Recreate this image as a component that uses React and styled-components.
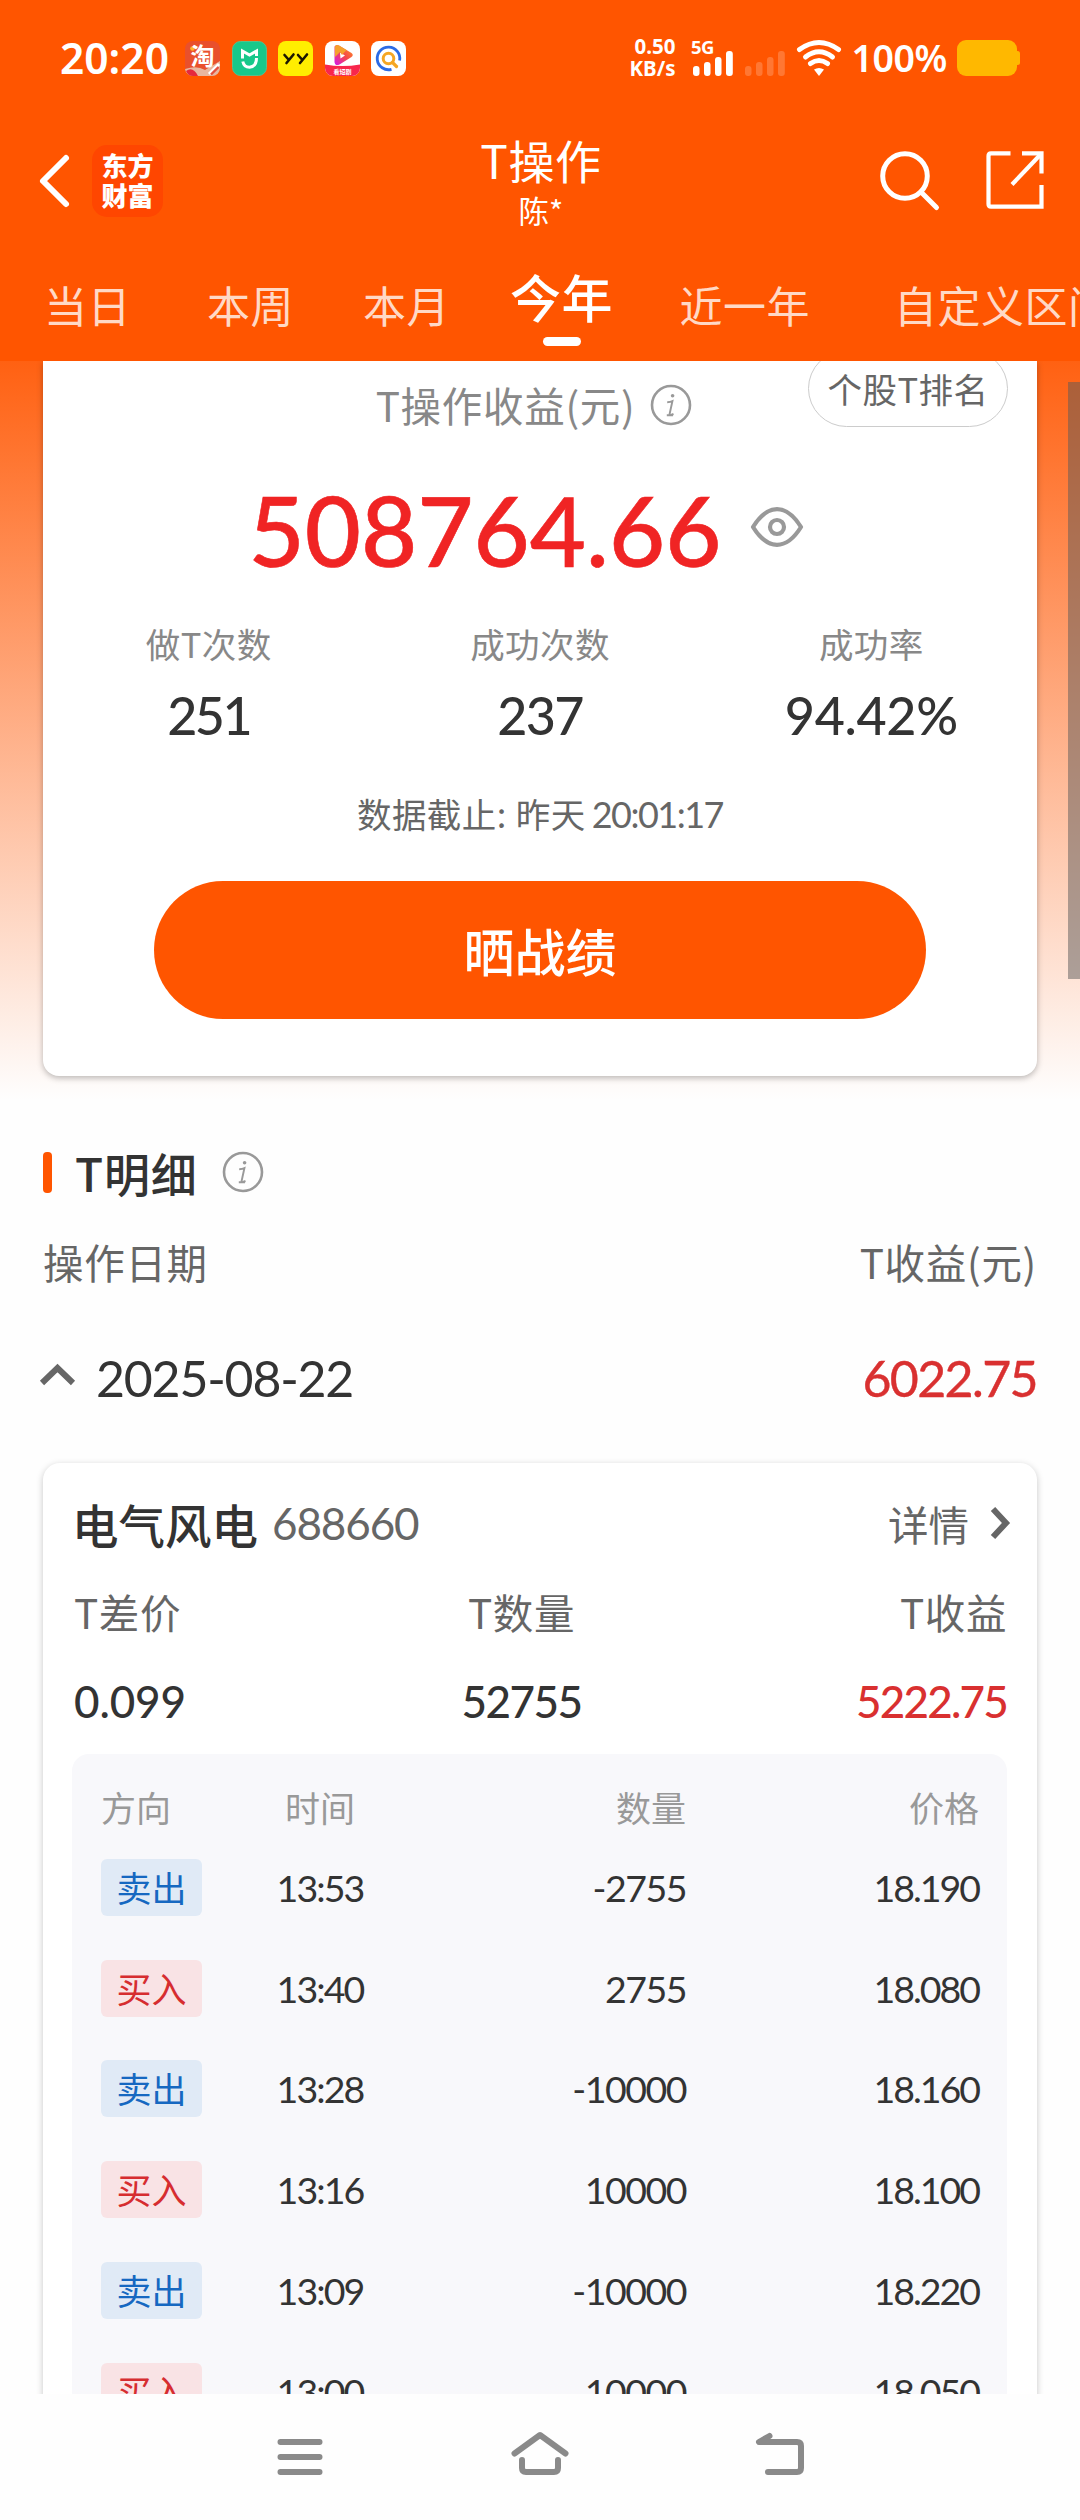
import React from 'react';
import styled, { createGlobalStyle } from 'styled-components';

const GlobalStyle = createGlobalStyle`
  * {
    box-sizing: border-box;
  }

  body {
    margin: 0;
    background: #fefefe;
    font-family: 'Noto Sans CJK SC', sans-serif;
    color: #333;
  }

  svg {
    display: block;
    flex-shrink: 0;
    overflow: visible;
  }
`;

const digits = "Lato, 'Noto Sans CJK SC', sans-serif";

const Screen = styled.div`
  width: 1080px;
  height: 2520px;
  display: flex;
  flex-direction: column;
  overflow: hidden;
  background: #fefefe;
`;

const Header = styled.header`
  height: 361px;
  flex-shrink: 0;
  background: #ff5500;
  color: #fff;
`;

/* ---------- status bar ---------- */

const StatusBar = styled.div`
  height: 116px;
  padding: 0 60px 0 60px;
  display: flex;
  align-items: center;
  justify-content: space-between;
  font-family: 'Noto Sans', sans-serif;
`;

const StatusGroup = styled.div`
  display: flex;
  align-items: center;
`;

const Clock = styled.span`
  width: 125px;
  font-size: 42.5px;
  font-weight: 600;
  line-height: 60px;
`;

const AppIcons = styled.div`
  display: flex;
  gap: 11.6px;
`;

const NetSpeed = styled.div`
  width: 48px;
  margin: 0 16px 1px 0;
  font-size: 20.5px;
  font-weight: 700;
  line-height: 21.5px;
  text-align: right;
`;

const Percent = styled.span`
  margin: 0 10px 0 9px;
  font-size: 37.5px;
  font-weight: 600;
  line-height: 60px;
  letter-spacing: -0.4px;
`;

/* ---------- title bar ---------- */

const TitleBar = styled.div`
  height: 132px;
  padding: 0 36px 0 38px;
  display: grid;
  grid-template-columns: 1fr auto 1fr;
  align-items: center;
`;

const TitleSide = styled.div`
  padding-bottom: ${props => (props.$end ? '4px' : '3px')};
  display: flex;
  align-items: center;
  justify-content: ${props => (props.$end ? 'flex-end' : 'flex-start')};
  gap: ${props => (props.$end ? '47px' : '20px')};
`;

const Brand = styled.div`
  width: 71px;
  height: 72px;
  padding-top: 5px;
  border-radius: 15px;
  background: #ff4600;
  font-size: 26px;
  font-weight: 900;
  line-height: 30px;
  text-align: center;
`;

const TitleText = styled.div`
  text-align: center;
`;

const PageTitle = styled.h1`
  margin: 0;
  padding-top: 1px;
  font-size: 46px;
  font-weight: 400;
  line-height: 56px;
  letter-spacing: 0.6px;
`;

const Account = styled.div`
  font-size: 30.5px;
  line-height: 47px;
`;

/* ---------- period tabs ---------- */

const Tabs = styled.nav`
  height: 113px;
  padding-left: 44px;
  display: flex;
  overflow: hidden;
  white-space: nowrap;
`;

const Tab = styled.div`
  margin-right: ${props => props.$gap}px;
  flex-shrink: 0;
  display: flex;
  flex-direction: column;
  align-items: center;
  padding-top: ${props => (props.$active ? 18 : 26)}px;
  font-size: ${props => (props.$active ? 51 : 43)}px;
  font-weight: ${props => (props.$active ? 500 : 400)};
  line-height: 60px;
  letter-spacing: 0.5px;
  color: ${props => (props.$active ? '#fff' : '#ffd9c6')};
`;

const TabMark = styled.span`
  width: 38px;
  height: 9px;
  margin-top: 11px;
  border-radius: 5px;
  background: #fff;
`;

/* ---------- scroll area ---------- */

const Content = styled.main`
  position: relative;
  height: 2033px;
  flex-shrink: 0;
  padding: 0 43px;
  overflow: hidden;
  background: linear-gradient(#ff6112 0, #fefefe 739px);
`;

const ScrollThumb = styled.div`
  position: absolute;
  top: 21px;
  right: 0;
  width: 12px;
  height: 597px;
  background: rgba(90, 90, 90, 0.5);
`;

const Summary = styled.section`
  position: relative;
  height: 715px;
  display: flex;
  flex-direction: column;
  align-items: center;
  border-radius: 0 0 16px 16px;
  background: #fff;
  box-shadow: 0 2px 6px rgba(0, 0, 0, 0.28);
`;

const SummaryTitle = styled.div`
  height: 90px;
  padding: 0 12px 3px 0;
  display: flex;
  align-items: center;
  gap: 15px;
  font-size: 40.5px;
  letter-spacing: 0.7px;
  color: #888;
`;

const RankButton = styled.button`
  position: absolute;
  top: -11px;
  right: 29px;
  width: 200px;
  height: 77px;
  padding: 0 0 2px;
  border: 1.5px solid #ccc;
  border-radius: 39px;
  background: #fff;
  font: inherit;
  font-size: 34.5px;
  letter-spacing: 0.5px;
  color: #666;
`;

const ProfitRow = styled.div`
  height: 158px;
  padding: 0 27px 0 0;
  display: flex;
  align-items: center;
  gap: 29px;
`;

const Profit = styled.div`
  font-family: ${digits};
  font-size: 97px;
  font-weight: 500;
  line-height: 110px;
  color: #f02424;
  -webkit-text-stroke: 0.6px #f02424;
`;

const EyeIcon = styled.svg`
  margin-bottom: 6px;
`;

const Stats = styled.div`
  width: 100%;
  padding-top: 9px;
  display: grid;
  grid-template-columns: repeat(3, 1fr);
  text-align: center;
`;

const StatLabel = styled.div`
  font-size: 34.5px;
  line-height: 50px;
  letter-spacing: 0.4px;
  color: #888;
`;

const StatValue = styled.div`
  margin-top: 17px;
  font-family: ${digits};
  font-size: 52px;
  font-weight: 500;
  line-height: 60px;
  letter-spacing: ${props => props.$track}px;
`;

const Deadline = styled.div`
  margin-top: 43px;
  font-size: 34.5px;
  line-height: 50px;
  letter-spacing: 0.4px;
  word-spacing: 1px;
  color: #666;
`;

const DeadlineTime = styled.span`
  margin-left: -3px;
  font-family: ${digits};
  font-size: 36px;
  letter-spacing: -1.5px;
`;

const ShareButton = styled.button`
  width: 772px;
  height: 138px;
  margin-top: 42px;
  padding: 0;
  border: 0;
  border-radius: 69px;
  background: #ff5500;
  color: #fff;
  font: inherit;
  font-size: 51px;
  font-weight: 500;
`;

/* ---------- detail list ---------- */

const SectionTitle = styled.div`
  height: 50px;
  margin-top: 71px;
  display: flex;
  align-items: center;
`;

const Accent = styled.span`
  width: 9px;
  height: 41px;
  border-radius: 4px;
  background: #ff5500;
`;

const SectionName = styled.h2`
  margin: 0 24px 0 23px;
  font-size: 46px;
  font-weight: 500;
  line-height: 50px;
  letter-spacing: 0.8px;
`;

const Row = styled.div`
  height: ${props => props.$height}px;
  margin-top: ${props => props.$top}px;
  display: flex;
  align-items: center;
  justify-content: space-between;
  font-size: 40.5px;
  letter-spacing: 0.7px;
  color: #666;
`;

const DateLabel = styled.div`
  margin-left: -1px;
  display: flex;
  align-items: center;
  gap: 21px;
  font-family: ${digits};
  font-size: 50px;
  letter-spacing: -1.2px;
  color: #333;
`;

const DayProfit = styled.div`
  font-family: ${digits};
  font-size: 50px;
  letter-spacing: -1.6px;
  color: #d93030;
  -webkit-text-stroke: 0.4px #d93030;
`;

const StockCard = styled.section`
  height: 1200px;
  margin-top: 55px;
  padding: 30px 30px 0 29px;
  border-radius: 17px;
  background: #fff;
  box-shadow: 0 2px 7px rgba(0, 0, 0, 0.22);
`;

const StockHead = styled.div`
  height: 60px;
  display: flex;
  align-items: center;
  justify-content: space-between;
`;

const StockName = styled.div`
  display: flex;
  align-items: center;
  gap: 14px;
  font-size: 46.5px;
  font-weight: 500;
`;

const StockCode = styled.span`
  font-family: ${digits};
  font-size: 44px;
  font-weight: 400;
  letter-spacing: -1.1px;
  color: #666;
`;

const DetailLink = styled.div`
  margin-right: -4px;
  display: flex;
  align-items: center;
  gap: 22px;
  font-size: 40.5px;
  color: #666;
`;

const TripleRow = styled.div`
  height: 50px;
  margin-top: ${props => props.$top}px;
  display: grid;
  grid-template-columns: 251px 1fr 251px;
  line-height: 50px;
  font-size: 40.5px;
  letter-spacing: 0.6px;
  color: #666;

  > :nth-child(1) {
    padding-left: 2px;
  }

  > :nth-child(2) {
    padding-right: 36px;
    text-align: center;
  }

  > :nth-child(3) {
    text-align: right;
  }
`;

const Figure = styled.span`
  font-family: ${digits};
  font-size: 44px;
  font-weight: 500;
  letter-spacing: ${props => props.$track}px;
  color: ${props => (props.$red ? '#d93030' : '#333')};
`;

const Trades = styled.div`
  height: 1000px;
  margin-top: 28px;
  padding: 27px 28px 0 29px;
  border-radius: 17px;
  background: #f8f8fb;
`;

const TradeRow = styled.div`
  height: ${props => (props.$head ? 56 : 100.8)}px;
  padding-bottom: ${props => (props.$head ? 7 : 0)}px;
  display: grid;
  grid-template-columns: 102px 234px 1fr 293px;
  align-items: center;
  font-size: 35px;
  color: #999;
`;

const HeadLabel = styled.span`
  text-align: ${props => props.$align};
`;

const Side = styled.span`
  width: 101px;
  height: 57px;
  border-radius: 6px;
  background: ${props => (props.$buy ? '#f9e3e5' : '#e0eaf6')};
  color: ${props => (props.$buy ? '#d62d30' : '#1668c1')};
  font-size: 35px;
  line-height: 55px;
  text-align: center;
`;

const Cell = styled.span`
  font-family: ${digits};
  font-size: 37.5px;
  letter-spacing: ${props => props.$track}px;
  text-align: ${props => props.$align};
  color: #333;
`;

/* ---------- system navigation ---------- */

const SystemNav = styled.footer`
  height: 126px;
  flex-shrink: 0;
  padding: 35px 240px 0;
  display: flex;
  justify-content: space-between;
  background: #fefefe;
`;

const InfoIcon = () => (
  <svg width="42" height="42" viewBox="0 0 42 42" fill="none" stroke="#999">
    <circle cx="21" cy="21" r="19" strokeWidth="2.6" />
    <path d="M17.2 18.2 Q20.5 18.2 22.4 17.2 L19.6 30 Q19.4 31.3 21 31 L23.5 30 M16.8 31.2 H23" strokeWidth="1.9" />
    <circle cx="22.6" cy="11.8" r="1.8" fill="#999" stroke="none" />
  </svg>
);

const Chevron = ({ width, height, points }) => (
  <svg width={width} height={height} fill="none" stroke="#666" strokeWidth="6">
    <polyline points={points} />
  </svg>
);

const SignalIcon = ({ faint, label }) => (
  <svg width={faint ? 42 : 54} height="40" viewBox={faint ? '0 0 42 40' : '0 0 54 40'}>
    {label && (
      <text x="0" y="16" fill="#fff" fontSize="18.5" fontWeight="700" letterSpacing="-0.6">
        {label}
      </text>
    )}
    <g fill="#fff" opacity={faint ? 0.2 : 1} transform={faint ? 'translate(0 0)' : 'translate(2 0)'}>
      <rect x="0" y="28" width="6.5" height="10" rx="3" />
      <rect x="11" y="24" width="6.5" height="14" rx="3" />
      <rect x="22" y="19" width="6.5" height="19" rx="3" />
      <rect x="33" y="13" width="6.8" height="25" rx="3" />
    </g>
  </svg>
);

const TaobaoIcon = () => (
  <svg width="35" height="35" viewBox="0 0 35 35">
    <rect width="35" height="35" rx="8" fill="#e9502c" />
    <path d="M0 28 Q12 24 20 29 L35 20 V27 A8 8 0 0 1 27 35 H8 A8 8 0 0 1 0 28 Z" fill="#e8b7a0" />
    <path d="M1 30 Q8 25 13 35 H8 Q3 35 1 30 Z" fill="#e5293d" />
    <path d="M24 33 L34 23" stroke="#fff" strokeWidth="3" />
    <path d="M26 33.5 L33.5 26" stroke="#e5503d" strokeWidth="2.4" />
    <circle cx="7.5" cy="7.5" r="2.3" fill="#ffb52e" />
    <text x="17.5" y="23.5" fill="#fff" fontSize="24" fontWeight="700" textAnchor="middle" fontFamily="Noto Sans CJK SC, sans-serif">
      淘
    </text>
  </svg>
);

const MijiaIcon = () => (
  <svg width="35" height="35" viewBox="0 0 35 35">
    <rect x="0.5" y="0.5" width="34" height="34" rx="8" fill="#18c88a" stroke="#58c08a" />
    <g fill="none" stroke="#fff" strokeWidth="3">
      <path d="M10.5 17.5 V10 L17.5 14 L24.5 10 V15" />
      <path d="M10.8 20.5 Q12 26.3 17.5 26.3 Q24.5 25.5 24.5 17" />
    </g>
  </svg>
);

const YYIcon = () => (
  <svg width="35" height="35" viewBox="0 0 35 35">
    <rect width="35" height="35" rx="8" fill="#ffee00" />
    <g fill="none" stroke="#1c1600" strokeWidth="2.6" strokeLinecap="round">
      <path d="M6.5 14 L10.5 18.5 M15.5 13.5 L8.5 22" />
      <path d="M20 14 L24 18.5 M29 13.5 L22 22" />
    </g>
  </svg>
);

const VideoIcon = () => (
  <svg width="35" height="35" viewBox="0 0 35 35">
    <defs>
      <linearGradient id="play" x1="1" y1="0" x2="0" y2="1">
        <stop offset="0" stopColor="#ff9a1e" />
        <stop offset="0.5" stopColor="#f5474a" />
        <stop offset="1" stopColor="#d514ee" />
      </linearGradient>
    </defs>
    <rect width="35" height="35" rx="8" fill="#fff" />
    <path d="M0 23.5 Q17.5 26.5 35 23.5 V27 A8 8 0 0 1 27 35 H8 A8 8 0 0 1 0 27 Z" fill="#f8264c" />
    <path d="M9.5 5.5 Q11 3 14 4.5 L26.5 12 Q29 14 26.5 16 L14.5 23.5 Q10 25.5 9.5 21 Z M15 11.5 L15.5 17.5 L20 14.5 Z" fill="url(#play)" fillRule="evenodd" />
    <path d="M10 5.5 Q11 3 14 4.5 L21.5 9 L17 14 L15 11 L10 16 Z" fill="#f5a02c" />
    <text x="17.5" y="32.6" fill="#fff" fontSize="6" fontWeight="700" textAnchor="middle" fontFamily="Noto Sans CJK SC, sans-serif">
      看短剧
    </text>
  </svg>
);

const SearchAppIcon = () => (
  <svg width="35" height="35" viewBox="0 0 35 35" fill="none">
    <rect width="35" height="35" rx="8" fill="#fff" />
    <path d="M20.5 28.3 A11.3 11.3 0 1 1 28.6 19.5" stroke="#2b6be6" strokeWidth="2.8" />
    <circle cx="17.5" cy="17.5" r="5.3" stroke="#f5a623" strokeWidth="3" />
    <path d="M21.5 21.5 L25.5 25.5" stroke="#f5a623" strokeWidth="3.2" strokeLinecap="round" />
  </svg>
);

const WifiIcon = () => (
  <svg width="46" height="38" viewBox="0 0 46 38" fill="none" stroke="#fff" strokeWidth="5" strokeLinecap="round">
    <path d="M3.5 10.5 Q23 -3.5 42.5 10.5" />
    <path d="M9.5 18 Q23 7.5 36.5 18" />
    <path d="M14.5 24.5 Q23 18.5 31.5 24.5" />
    <path d="M18 30.5 Q23 27.5 28 30.5 L23 37 Z" fill="#fff" stroke="none" />
  </svg>
);

const BatteryIcon = () => (
  <svg width="63" height="36" viewBox="0 0 63 36" fill="#ffb800">
    <rect width="60" height="36" rx="9" />
    <rect x="56" y="11" width="7" height="14" rx="2.5" />
  </svg>
);

const periods = [
  { name: '当日', gap: 76 },
  { name: '本周', gap: 69 },
  { name: '本月', gap: 60 },
  { name: '今年', gap: 66.5, active: true },
  { name: '近一年', gap: 84 },
  { name: '自定义区间', gap: 0 }
];

const stats = [
  { label: '做T次数', value: '251', track: -2.6 },
  { label: '成功次数', value: '237', track: -1.6 },
  { label: '成功率', value: '94.42%', track: -0.3 }
];

const trades = [
  { side: '卖出', time: '13:53', amount: '-2755', price: '18.190' },
  { side: '买入', time: '13:40', amount: '2755', price: '18.080' },
  { side: '卖出', time: '13:28', amount: '-10000', price: '18.160' },
  { side: '买入', time: '13:16', amount: '10000', price: '18.100' },
  { side: '卖出', time: '13:09', amount: '-10000', price: '18.220' },
  { side: '买入', time: '13:00', amount: '10000', price: '18.050' }
];

const App = () => {
  return (
    <>
      <GlobalStyle />
      <Screen>
        <Header>
          <StatusBar>
            <StatusGroup>
              <Clock>20:20</Clock>
              <AppIcons>
                <TaobaoIcon />
                <MijiaIcon />
                <YYIcon />
                <VideoIcon />
                <SearchAppIcon />
              </AppIcons>
            </StatusGroup>
            <StatusGroup>
              <NetSpeed>
                0.50
                <br />
                KB/s
              </NetSpeed>
              <SignalIcon label="5G" />
              <SignalIcon faint />
              <svg width="9" height="1" />
              <WifiIcon />
              <Percent>100%</Percent>
              <BatteryIcon />
            </StatusGroup>
          </StatusBar>

          <TitleBar>
            <TitleSide>
              <svg width="34" height="56" viewBox="0 0 34 56" fill="none" stroke="#fff" strokeWidth="6" strokeLinecap="round" strokeLinejoin="round">
                <polyline points="28,5 5,28 28,51" />
              </svg>
              <Brand>
                东方
                <br />
                财富
              </Brand>
            </TitleSide>
            <TitleText>
              <PageTitle>T操作</PageTitle>
              <Account>陈*</Account>
            </TitleText>
            <TitleSide $end>
              <svg width="60" height="60" viewBox="0 0 60 60" fill="none" stroke="#fff" strokeWidth="5" strokeLinecap="round">
                <circle cx="26" cy="26" r="22.3" />
                <path d="M42 42 L57.5 57.5" />
              </svg>
              <svg width="58" height="58" viewBox="0 0 58 58" fill="none" stroke="#fff" strokeWidth="4.2">
                <path d="M24.5 2.3 H5 Q2.5 2.3 2.5 5 V53 Q2.5 55.7 5 55.7 H55.5 V34" />
                <path d="M36 2.3 H55.5 V22.5" />
                <path d="M26 33.5 L55 3" />
              </svg>
            </TitleSide>
          </TitleBar>

          <Tabs>
            {periods.map(p => (
              <Tab key={p.name} $gap={p.gap} $active={p.active}>
                {p.name}
                {p.active && <TabMark />}
              </Tab>
            ))}
          </Tabs>
        </Header>

        <Content>
          <Summary>
            <SummaryTitle>
              T操作收益(元)
              <InfoIcon />
            </SummaryTitle>
            <RankButton>个股T排名</RankButton>
            <ProfitRow>
              <Profit>508764.66</Profit>
              <EyeIcon width="54" height="42" viewBox="0 0 54 42" fill="none" stroke="#999" strokeWidth="4.2">
                <path d="M3 21 Q14 3.2 27 3.2 Q40 3.2 51 21 Q40 38.8 27 38.8 Q14 38.8 3 21 Z" strokeLinejoin="round" />
                <circle cx="27" cy="21" r="7" />
              </EyeIcon>
            </ProfitRow>
            <Stats>
              {stats.map(s => (
                <div key={s.label}>
                  <StatLabel>{s.label}</StatLabel>
                  <StatValue $track={s.track}>{s.value}</StatValue>
                </div>
              ))}
            </Stats>
            <Deadline>
              数据截止: 昨天 <DeadlineTime>20:01:17</DeadlineTime>
            </Deadline>
            <ShareButton>晒战绩</ShareButton>
          </Summary>

          <SectionTitle>
            <Accent />
            <SectionName>T明细</SectionName>
            <InfoIcon />
          </SectionTitle>
          <Row $height={50} $top={39}>
            <span>操作日期</span>
            <span>T收益(元)</span>
          </Row>
          <Row $height={60} $top={62}>
            <DateLabel>
              <Chevron width={33} height={28} points="0,19 15.5,4 31,19" />
              2025-08-22
            </DateLabel>
            <DayProfit>6022.75</DayProfit>
          </Row>

          <StockCard>
            <StockHead>
              <StockName>
                电气风电
                <StockCode>688660</StockCode>
              </StockName>
              <DetailLink>
                详情
                <Chevron width={20} height={36} points="2,4 15,18 2,32" />
              </DetailLink>
            </StockHead>
            <TripleRow $top={34}>
              <span>T差价</span>
              <span>T数量</span>
              <span>T收益</span>
            </TripleRow>
            <TripleRow $top={39}>
              <Figure $track={-0.1}>0.099</Figure>
              <Figure $track={-1.5}>52755</Figure>
              <Figure $track={-1.8} $red>
                5222.75
              </Figure>
            </TripleRow>

            <Trades>
              <TradeRow $head>
                <HeadLabel>方向</HeadLabel>
                <HeadLabel $align="center">时间</HeadLabel>
                <HeadLabel $align="right">数量</HeadLabel>
                <HeadLabel $align="right">价格</HeadLabel>
              </TradeRow>
              {trades.map(t => (
                <TradeRow key={t.time}>
                  <Side $buy={t.side === '买入'}>{t.side}</Side>
                  <Cell $align="center" $track={-1.9}>
                    {t.time}
                  </Cell>
                  <Cell $align="right" $track={-1.5}>
                    {t.amount}
                  </Cell>
                  <Cell $align="right" $track={-2}>
                    {t.price}
                  </Cell>
                </TradeRow>
              ))}
            </Trades>
          </StockCard>
          <ScrollThumb />
        </Content>

        <SystemNav>
          <svg width="120" height="60" viewBox="0 0 120 60" fill="none" stroke="#8a8a8a" strokeWidth="6" strokeLinecap="round">
            <path d="M40.5 13 H79.5 M40.5 28 H79.5 M40.5 43 H79.5" />
          </svg>
          <svg width="120" height="60" viewBox="0 0 120 60" fill="none" stroke="#8a8a8a" strokeWidth="6" strokeLinecap="round" strokeLinejoin="round">
            <path d="M34.5 24.5 L60 6 L85.5 24.5" />
            <path d="M42 31 V39 Q42 43 46 43 H74 Q78 43 78 39 V31" />
          </svg>
          <svg width="120" height="60" viewBox="0 0 120 60" fill="none" stroke="#8a8a8a" strokeWidth="6" strokeLinecap="round" strokeLinejoin="round">
            <path d="M49.5 7 L39 13 H77 Q81 13 81 17 V39 Q81 43 77 43 H48" />
          </svg>
        </SystemNav>
      </Screen>
    </>
  );
};

export default App;
